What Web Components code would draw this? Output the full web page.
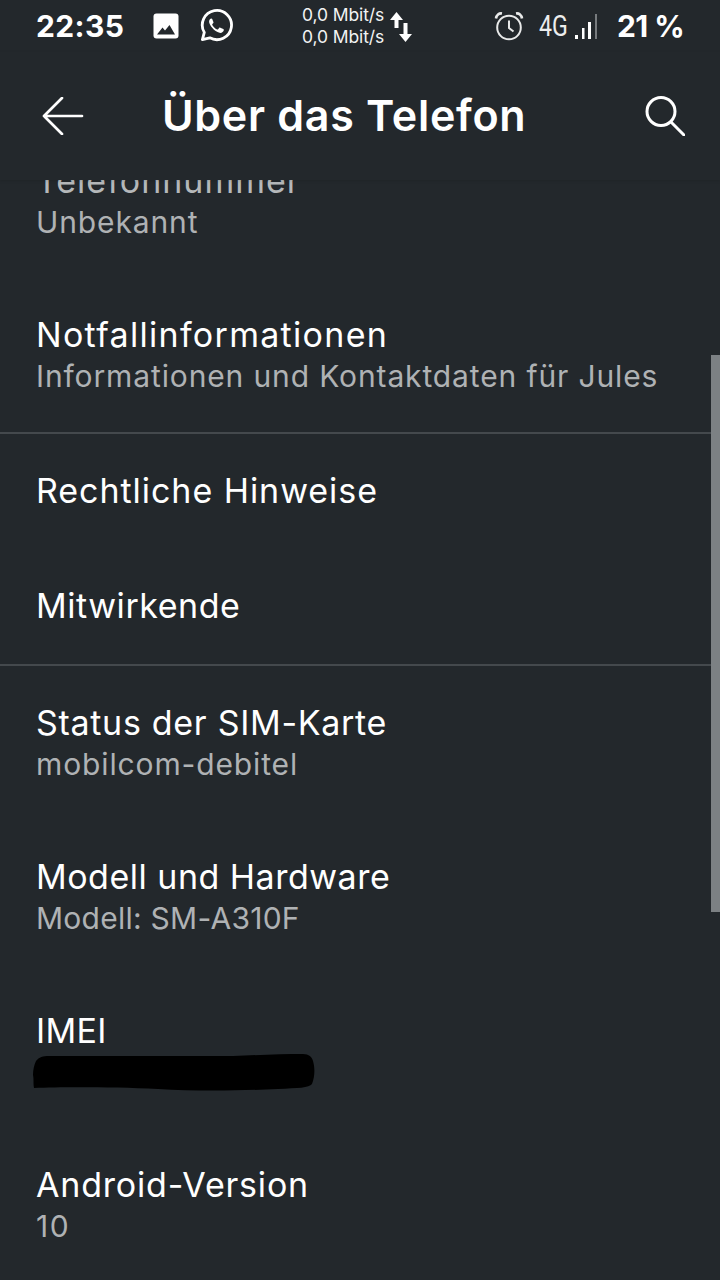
<!DOCTYPE html>
<html><head><meta charset="utf-8">
<style>
html,body{margin:0;padding:0;background:#23282c;}
body{width:720px;height:1280px;overflow:hidden;font-family:Inter,"Noto Sans",sans-serif;color:#fff}
</style></head><body>
<template id="tpl-status"><style>
:host{display:flex;align-items:center;height:52px;padding:0 0 0 36px;box-sizing:border-box;color:#fff;font-family:Inter,sans-serif}
.time{font-size:30px;font-weight:700;width:117px;line-height:52px;letter-spacing:.4px;box-sizing:border-box}
.ic{display:block;flex:none}
.net{font-size:17.5px;line-height:22px;margin-left:69px;width:85px;letter-spacing:-.1px;color:#f2f3f3;white-space:nowrap}
.batt{font-size:30px;font-weight:700;margin-left:19px;letter-spacing:-.6px;white-space:nowrap}
.g{font-family:Roboto,sans-serif;font-weight:400;font-size:29px;line-height:52px;margin-left:15px;transform:scaleX(.8);transform-origin:left;width:28px;color:#eceded;white-space:nowrap}
</style>
<span class="time">22:35</span>
<svg class="ic" width="26" height="26" viewBox="0 0 26 26"><rect x="0.500" y="0.500" width="25" height="25" rx="3" fill="#fff"/><path d="M4 21.500 9.500 14.500 12 17.500 16.500 12 22 21.500Z" fill="#23282c"/></svg>
<svg class="ic" style="margin-left:20px" width="34" height="34" viewBox="0 0 34 34" fill="none"><path d="M3.400 30.600 5.300 23.400A14.600 14.600 0 1 1 10.800 28.800Z" stroke="#fff" stroke-width="2.800" stroke-linejoin="round"/><path d="M12.500 9.500c-1.400 0-2.600 1.600-2.400 3.500.3 3.200 5.200 9.500 10.400 10.800 2 .5 3.900-.8 4.300-2.500.1-.6 0-1-.5-1.200l-3-1.400c-.5-.2-.9-.1-1.200.3l-1 1.300c-.3.300-.6.300-1 .2-2-.8-3.900-2.600-4.800-4.400-.2-.4-.1-.7.1-1l.9-1.100c.2-.3.300-.7.100-1.100l-1.200-2.800c-.2-.4-.4-.6-.7-.6Z" fill="#fff"/></svg>
<div class="net">0,0 Mbit/s<br>0,0 Mbit/s</div>
<svg class="ic" style="margin-left:2px" width="24" height="34" viewBox="0 0 24 34" fill="#fff"><path d="M7.500 3 14 11H9.500V19H5.500V11H1Z"/><path d="M16.500 33 10 25H14.500V14H18.500V25H23Z"/></svg>
<svg class="ic" style="margin-left:81px" width="30" height="30" viewBox="0 0 30 30" fill="none" stroke="#e9eaea"><circle cx="15" cy="16.500" r="11.800" stroke-width="2"/><path d="M15 9.500V17L19.500 20.500" stroke-width="2"/><path d="M2 7.500C2.500 4 5 2 8 2.500M28 7.500C27.500 4 25 2 22 2.500" stroke-width="2.600"/></svg>
<span class="g">4G</span>
<svg class="ic" style="margin-left:7px" width="24" height="28" viewBox="0 0 24 28"><rect x="1" y="23" width="3" height="4" fill="#fff"/><rect x="8" y="16" width="2.500" height="11" fill="#fff"/><rect x="14" y="10" width="3" height="17" fill="#fff"/><rect x="21" y="2" width="2" height="25" fill="#777b7e"/></svg>
<span class="batt">21 %</span>
</template>

<template id="tpl-appbar"><style>
:host{display:flex;align-items:center;height:128px;padding:0 35px 0 42px;box-sizing:border-box;position:relative;z-index:2;background:#23282c;box-shadow:0 1px 3px rgba(0,0,0,.12)}
h1{margin:0 0 2px 78px;font:600 43px/1 Inter,sans-serif;flex:1;white-space:nowrap;letter-spacing:.7px;color:#fff}
svg{display:block;flex:none}
</style>
<svg width="42" height="38" viewBox="0 0 42 38" fill="none" stroke="#fff" stroke-width="2.700" stroke-linecap="round" stroke-linejoin="round"><path d="M2 19H40M20 1 2 19 20 37"/></svg>
<h1><slot></slot></h1>
<svg width="40" height="40" viewBox="0 0 40 40" fill="none" stroke="#fff" stroke-width="3" stroke-linecap="round"><circle cx="16" cy="15.500" r="14"/><path d="M26 26 39 39"/></svg>
</template>

<template id="tpl-list"><style>
:host{display:block;height:1100px;overflow:hidden;position:relative}
.inner{margin-top:-56px}
.bar{position:absolute;right:0;top:175px;width:9px;height:557px;background:#7c8184}
</style><div class="inner"><slot></slot></div><div class="bar"></div></template>

<template id="tpl-item"><style>
:host{display:block;padding:35.5px 36px;box-sizing:border-box}
:host([single]){padding:36px 36px 37px}
.t{font-size:34px;letter-spacing:var(--tl,1px);line-height:42px;color:#fff;font-weight:400;white-space:nowrap}
:host([dim]) .t{color:#b5b8ba}
.s{font-size:30px;letter-spacing:var(--sl,.87px);line-height:41px;color:#afb2b4;white-space:nowrap}
:host([single]) .s{display:none}
</style><div class="t"><slot name="t"></slot></div><div class="s"><slot name="s"></slot></div></template>

<template id="tpl-sep"><style>:host{display:block;height:2px;background:#44494d}</style></template>
<template id="tpl-redact"><style>:host{display:block;margin:2px 0 2px -3px;width:282px;height:37px}svg{display:block}</style><svg width="282" height="37" viewBox="0 0 282 37"><path d="M3 7C6 3 10 2 16 2L200 2C225 1 250 0 270 0 276 0 279 3 280 7 282 14 282 22 279 30 276 34 265 34 245 35 200 37 160 37 125 35 80 33 30 33 1 34 0 28 1 26 0 21 0 16 1 11 3 7Z" fill="#000"/></svg></template>

<phone-status></phone-status>
<app-bar>Über das Telefon</app-bar>
<setting-list>
<setting-item dim style="--tl:1px"><span slot="t">Telefonnummer</span><span slot="s">Unbekannt</span></setting-item>
<setting-item style="--tl:1.3px"><span slot="t">Notfallinformationen</span><span slot="s">Informationen und Kontaktdaten für Jules</span></setting-item>
<list-sep></list-sep>
<setting-item single style="--tl:.95px"><span slot="t">Rechtliche Hinweise</span></setting-item>
<setting-item single style="--tl:.55px"><span slot="t">Mitwirkende</span></setting-item>
<list-sep></list-sep>
<setting-item style="--tl:.7px"><span slot="t">Status der SIM-Karte</span><span slot="s">mobilcom-debitel</span></setting-item>
<setting-item style="--tl:.5px;--sl:.25px"><span slot="t">Modell und Hardware</span><span slot="s">Modell: SM-A310F</span></setting-item>
<setting-item style="--tl:.3px"><span slot="t">IMEI</span><redact-bar slot="s"></redact-bar></setting-item>
<setting-item style="--tl:.8px;--sl:1.5px"><span slot="t">Android-Version</span><span slot="s">10</span></setting-item>
</setting-list>
<script>
for(const [n,id] of [['phone-status','tpl-status'],['app-bar','tpl-appbar'],['setting-list','tpl-list'],['setting-item','tpl-item'],['list-sep','tpl-sep'],['redact-bar','tpl-redact']]){
 customElements.define(n,class extends HTMLElement{constructor(){super();this.attachShadow({mode:'open'}).appendChild(document.getElementById(id).content.cloneNode(true));}});
}
</script>
</body></html>
